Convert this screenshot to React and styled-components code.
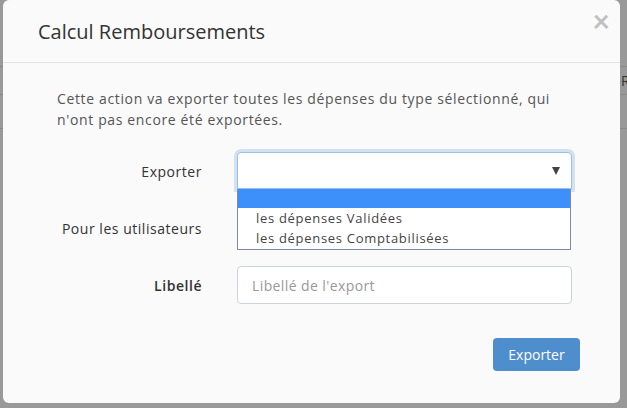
import React from 'react'
import styled, { createGlobalStyle } from 'styled-components'

const Global = createGlobalStyle`
  html, body {
    margin: 0;
    padding: 0;
    width: 100%;
    height: 100%;
    overflow: hidden;
  }
  body {
    font-family: "Open Sans", Lato, sans-serif;
  }
`

// page behind the overlay, only a few table lines show through
const Backdrop = styled.div`
  position: fixed;
  inset: 0;
  background:
    linear-gradient(#8a8a8a, #8a8a8a) 0 66px / 100% 1px no-repeat,
    linear-gradient(#8a8a8a, #8a8a8a) 0 94px / 100% 1px no-repeat,
    linear-gradient(#8a8a8a, #8a8a8a) 0 128px / 100% 1px no-repeat,
    #999999;
`

const PeekText = styled.span`
  position: absolute;
  left: 621px;
  top: 71px;
  font-size: 14px;
  color: #333;
`

const Modal = styled.div`
  position: fixed;
  left: 3px;
  top: 0;
  width: 617px;
  height: 403px;
  background: #fafafa;
  border-radius: 6px;
  display: flex;
  flex-direction: column;
`

const Header = styled.div`
  height: 62px;
  border-bottom: 1px solid #e3e3e3;
  display: flex;
  align-items: center;
  padding: 0 0 0 35px;
  position: relative;
`

const Title = styled.h4`
  margin: 0;
  font-size: 20px;
  font-weight: 400;
  color: #333;
`

const Close = styled.button`
  position: absolute;
  right: 10px;
  top: 5px;
  border: 0;
  background: none;
  padding: 0;
  font-size: 30px;
  line-height: 30px;
  font-weight: 700;
  color: #c0c0c0;
  font-family: Lato, sans-serif;
`

const Body = styled.div`
  padding: 25px 48px 0 54px;
`

const Intro = styled.p`
  margin: 0 0 22px;
  font-size: 14px;
  line-height: 21px;
  letter-spacing: 0.64px;
  color: #555;
`

const Row = styled.div`
  display: grid;
  grid-template-columns: 145px 335px;
  column-gap: 35px;
  align-items: center;
  height: 38px;
  margin-bottom: 19px;
  position: relative;
  z-index: ${p => (p.$raised ? 2 : 1)};
`

const Label = styled.label`
  text-align: right;
  font-size: 14px;
  letter-spacing: 0.53px;
  color: #333;
  white-space: nowrap;
  font-weight: ${p => (p.$bold ? 600 : 400)};
`

const Field = styled.div`
  position: relative;
  height: 38px;
`

const SelectBox = styled.div`
  box-sizing: border-box;
  height: 37px;
  background: #fff;
  border: 1px solid #9cbfe6;
  border-radius: 4px 4px 0 0;
  box-shadow: 0 0 0 3px #d3e2f2;
  display: flex;
  align-items: center;
  justify-content: flex-end;
  padding-right: 11px;
`

const Caret = styled.span`
  width: 0;
  height: 0;
  border-left: 4px solid transparent;
  border-right: 4px solid transparent;
  border-top: 8px solid #444;
`

const Menu = styled.ul`
  position: absolute;
  left: 0;
  top: 37px;
  width: 334px;
  margin: 0;
  padding: 0 0 1px;
  list-style: none;
  background: #fff;
  border: 1px solid #7d8aa3;
  border-top: 0;
  box-sizing: border-box;
`

const Option = styled.li`
  height: ${p => (p.$active ? '19px' : '20px')};
  line-height: 20px;
  padding-left: 18px;
  font-size: 13px;
  letter-spacing: 0.7px;
  color: #444;
  background: ${p => (p.$active ? '#3d8ffa' : 'transparent')};
`

const SmallInput = styled.div`
  box-sizing: border-box;
  width: 80px;
  height: 36px;
  background: #fff;
  border: 1px solid #ccd3dc;
  border-radius: 4px;
`

const Input = styled.input`
  box-sizing: border-box;
  width: 100%;
  height: 38px;
  border: 1px solid #ccd3dc;
  border-radius: 4px;
  background: #fff;
  padding: 0 14px;
  font-family: "Open Sans", sans-serif;
  font-size: 14px;
  letter-spacing: 0.4px;
  color: #555;
  outline: none;
  &::placeholder {
    color: #999;
  }
`

const Footer = styled.div`
  display: flex;
  justify-content: flex-end;
  padding: 15px 40px 0 0;
`

const Button = styled.button`
  width: 87px;
  height: 33px;
  padding: 0;
  border: 0;
  border-radius: 4px;
  background: #4f8ecd;
  color: #fff;
  font-family: "Open Sans", sans-serif;
  font-size: 14px;
`

const options = ['', 'les dépenses Validées', 'les dépenses Comptabilisées']

export default function App() {
  return (
    <>
      <Global />
      <Backdrop>
        <PeekText>R</PeekText>
      </Backdrop>
      <Modal>
        <Header>
          <Title>Calcul Remboursements</Title>
          <Close>×</Close>
        </Header>
        <Body>
          <Intro>
            Cette action va exporter toutes les dépenses du type sélectionné, qui
            <br />
            n'ont pas encore été exportées.
          </Intro>
          <Row $raised>
            <Label>Exporter</Label>
            <Field>
              <SelectBox>
                <Caret />
              </SelectBox>
              <Menu>
                {options.map((o, i) => (
                  <Option key={i} $active={i === 0}>{o}</Option>
                ))}
              </Menu>
            </Field>
          </Row>
          <Row>
            <Label>Pour les utilisateurs</Label>
            <Field>
              <SmallInput />
            </Field>
          </Row>
          <Row>
            <Label $bold>Libellé</Label>
            <Input placeholder="Libellé de l'export" />
          </Row>
        </Body>
        <Footer>
          <Button>Exporter</Button>
        </Footer>
      </Modal>
    </>
  )
}
